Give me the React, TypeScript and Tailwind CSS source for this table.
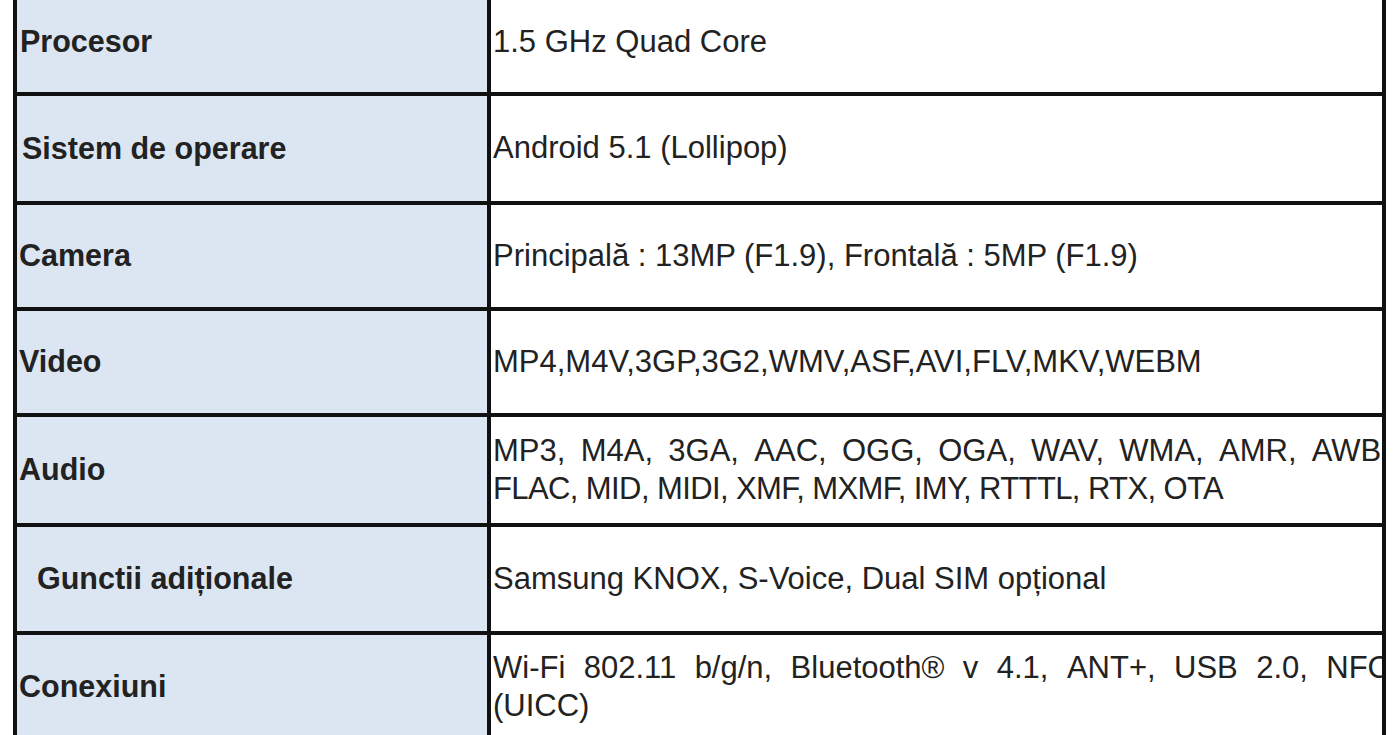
import React from 'react';

type Row = {
  label: string;
  labelPad: string;
  height: string;
  value?: string;
  lines?: { justified: string; rest: string; restClass?: string };
};

const ROWS: Row[] = [
  { label: 'Procesor', labelPad: 'pl-[3px]', height: 'h-[104px]', value: '1.5 GHz Quad Core' },
  { label: 'Sistem de operare', labelPad: 'pl-[5px]', height: 'h-[109px]', value: 'Android 5.1 (Lollipop)' },
  { label: 'Camera', labelPad: 'pl-[2px]', height: 'h-[106px]', value: 'Principală : 13MP (F1.9), Frontală : 5MP (F1.9)' },
  { label: 'Video', labelPad: 'pl-[2px]', height: 'h-[106px]', value: 'MP4,M4V,3GP,3G2,WMV,ASF,AVI,FLV,MKV,WEBM' },
  {
    label: 'Audio',
    labelPad: 'pl-[2px]',
    height: 'h-[110px]',
    lines: {
      justified: 'MP3, M4A, 3GA, AAC, OGG, OGA, WAV, WMA, AMR, AWB,',
      rest: 'FLAC, MID, MIDI, XMF, MXMF, IMY, RTTTL, RTX, OTA',
      restClass: 'tracking-[-0.6px]',
    },
  },
  { label: 'Gunctii adiționale', labelPad: 'pl-[20px]', height: 'h-[108px]', value: 'Samsung KNOX, S-Voice, Dual SIM opțional' },
  {
    label: 'Conexiuni',
    labelPad: 'pl-[2px]',
    height: 'h-[104px]',
    lines: {
      justified: 'Wi-Fi 802.11 b/g/n, Bluetooth® v 4.1, ANT+, USB 2.0, NFC',
      rest: '(UICC)',
    },
  },
];

// first line of a wrapped cell: words spread edge to edge, slightly past the border
function JustifiedLine({ text }: { text: string }) {
  return (
    <div className="flex justify-between mr-[-8px] whitespace-nowrap">
      {text.split(' ').map((w, i) => (
        <span key={i}>{w}</span>
      ))}
    </div>
  );
}

export default function App() {
  return (
    <div className="min-h-screen bg-white overflow-hidden font-['Liberation_Sans',Arial,sans-serif] text-[#222]">
      <div className="ml-[13px] mt-[-12px] w-[1373px] border-4 border-[#111]">
        {ROWS.map((row, i) => (
          <div
            key={row.label}
            className={`flex ${row.height} ${i < ROWS.length - 1 ? 'border-b-4 border-[#111]' : ''}`}
          >
            <div className={`w-[474px] shrink-0 border-r-4 border-[#111] bg-[#dce6f2] flex items-center font-bold text-[30.5px] ${row.labelPad}`}>
              {row.label}
            </div>
            <div className="flex-1 overflow-hidden flex items-center pl-[2px] text-[31px]">
              {row.lines ? (
                <div className="w-full leading-[38px]">
                  <JustifiedLine text={row.lines.justified} />
                  <div className={row.lines.restClass}>{row.lines.rest}</div>
                </div>
              ) : (
                <div className="whitespace-nowrap">{row.value}</div>
              )}
            </div>
          </div>
        ))}
      </div>
    </div>
  );
}
